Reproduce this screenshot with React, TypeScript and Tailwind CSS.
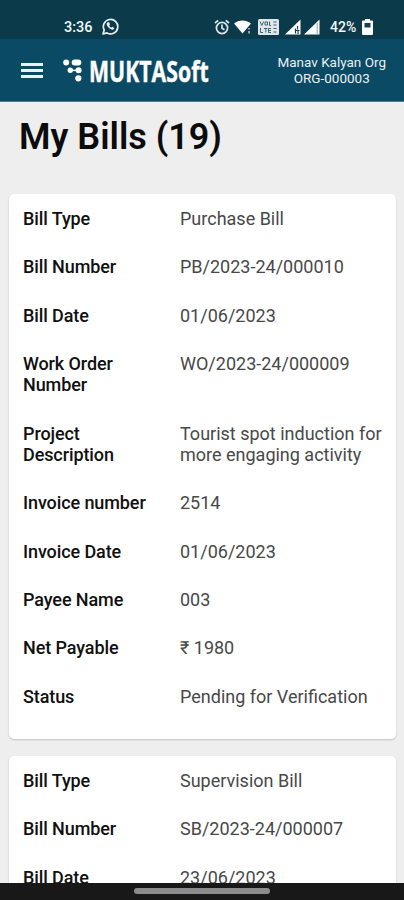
import { Fragment } from 'react'

type Field = { label: string; value: string }

const bills: Field[][] = [
  [
    { label: 'Bill Type', value: 'Purchase Bill' },
    { label: 'Bill Number', value: 'PB/2023-24/000010' },
    { label: 'Bill Date', value: '01/06/2023' },
    { label: 'Work Order Number', value: 'WO/2023-24/000009' },
    { label: 'Project Description', value: 'Tourist spot induction for more engaging activity' },
    { label: 'Invoice number', value: '2514' },
    { label: 'Invoice Date', value: '01/06/2023' },
    { label: 'Payee Name', value: '003' },
    { label: 'Net Payable', value: '₹ 1980' },
    { label: 'Status', value: 'Pending for Verification' },
  ],
  [
    { label: 'Bill Type', value: 'Supervision Bill' },
    { label: 'Bill Number', value: 'SB/2023-24/000007' },
    { label: 'Bill Date', value: '23/06/2023' },
  ],
]

function WhatsAppIcon() {
  return (
    <svg className="ml-[9px] size-[17px]" viewBox="0 0 17 17" fill="none">
      <path d="M1 16l1.2-4A7.2 7.2 0 1 1 5 14.9z" stroke="#e8eef0" strokeWidth="1.7" strokeLinejoin="round" />
      <path
        d="M5.600 4.300c-1.500.9-1.200 2.700.3 4.500 1.700 2.200 4.300 3.700 5.900 2.500l.5-1.400-2.100-1.200-1.100 1C8.300 9.200 7.600 8.400 7.200 7.400l.8-1L7.200 4.300z"
        fill="#e8eef0"
      />
    </svg>
  )
}

function AlarmIcon() {
  return (
    <svg className="size-4" viewBox="0 0 16 16" fill="none" stroke="#dfe7ea" strokeWidth="1.7">
      <circle cx="8" cy="9" r="5.6" />
      <path d="M1 4l3.200-2.700M15 4l-3.200-2.700M8 5.500V9.200l2.500 1.500" />
    </svg>
  )
}

function WifiIcon() {
  return (
    <svg className="ml-1 h-4 w-[18px]" viewBox="0 0 18 16">
      <path d="M0 4.500C5 .5 12 .5 17 4.500l-3.600 4.300-4.900 5.700z" fill="#fff" />
      <path d="M15 9v1.500M15 12v2.500" stroke="#b9c8ce" strokeWidth="1.5" />
    </svg>
  )
}

function VolteIcon() {
  return (
    <svg className="ml-[6px] h-4 w-[21px]" viewBox="0 0 21 16">
      <rect width="21" height="16" rx="1.500" fill="#dfe7ea" />
      <path
        d="M2 2.500l1.800 4 1.800-4M7 3h2.500v3H7zM11.500 2.500v4h1.500M2.500 9v4.500H5M6 9.500h3.500M7.800 9.500v4M13 9.500h-2.500v4H13M10.500 11.500H13M15.500 3h3M15.500 6h3M15.500 9.500h3M15.500 13h3"
        stroke="#406372"
        fill="none"
      />
    </svg>
  )
}

function SignalIcon({ data = false }: { data?: boolean }) {
  return (
    <svg className="size-4" viewBox="0 0 16 16">
      <path d="M15.500.5v15H0z" fill="#fff" />
      {data ? (
        <path d="M10.500 9.500v5M12.500 7v3.500M10.500 11.500h4M13 12v3" stroke="#153f50" strokeWidth="1.200" fill="none" />
      ) : (
        <path d="M13.200 4v11" stroke="#8ba3ad" />
      )}
    </svg>
  )
}

function BatteryIcon() {
  return (
    <svg className="ml-[5px] h-4 w-[11px]" viewBox="0 0 11 16">
      <path d="M3 0h5v1.500h2q1 0 1 1V15q0 1-1 1H1q-1 0-1-1V2.500q0-1 1-1h2z" fill="#fff" />
      <path d="M2.500 4h6v4.500h-6z" fill="#153f50" />
    </svg>
  )
}

function StatusBar() {
  return (
    <div className="flex h-[39px] items-start bg-[#0b3a4b] pt-[18px] text-[#f4f7f8]">
      <div className="ml-16 flex h-[17px] items-center">
        <span className="w-[29px] pt-0.5 text-[14.500px] leading-4 font-medium whitespace-nowrap">3:36</span>
        <WhatsAppIcon />
      </div>
      <div className="mr-[31px] ml-auto flex h-[17px] items-center">
        <AlarmIcon />
        <WifiIcon />
        <VolteIcon />
        <div className="ml-[6px] flex gap-[3px]">
          <SignalIcon data />
          <SignalIcon />
        </div>
        <span className="ml-[10px] w-[27px] pt-px text-[14px] leading-4 font-medium whitespace-nowrap">42%</span>
        <BatteryIcon />
      </div>
    </div>
  )
}

function Logo() {
  return (
    <div className="ml-5 flex items-center pt-px">
      <svg className="h-[23px] w-5" viewBox="0 0 20 23" fill="#fff">
        <circle cx="3.200" cy="3.400" r="3" />
        <rect x="8.700" y=".5" width="9.600" height="6" rx="3" />
        <circle cx="7.300" cy="11.300" r="2.700" />
        <circle cx="15.600" cy="11.300" r="3" />
        <path d="M7 10.600h8v1.500H7z" />
        <circle cx="15.300" cy="19.300" r="3.100" />
      </svg>
      <span className="ml-[6px] w-[119px] origin-left scale-x-[.76] font-['Open_Sans'] text-[28px] leading-8 font-bold whitespace-nowrap [-webkit-text-stroke:0.4px_white]">
        MUKTASoft
      </span>
    </div>
  )
}

function Header() {
  return (
    <header className="flex h-[63px] items-center border-b border-[#54798b] bg-[#0b4a64] text-white">
      <div className="ml-[21px] flex w-[22px] flex-col gap-[3px] pt-px">
        <span className="h-[3px] bg-[#eef0f8]" />
        <span className="h-[3px] bg-[#eef0f8]" />
        <span className="h-[3px] bg-[#eef0f8]" />
      </div>
      <Logo />
      <div className="mr-[18px] ml-auto text-center text-[13.500px] leading-4 whitespace-nowrap text-[#e9f0f3]">
        <p>Manav Kalyan Org</p>
        <p>ORG-000003</p>
      </div>
    </header>
  )
}

function BillCard({ fields }: { fields: Field[] }) {
  return (
    <section className="grid shrink-0 grid-cols-[130px_1fr] gap-x-[27px] gap-y-[27px] rounded-[5px] bg-white px-[14px] pt-[14px] pb-8 text-[18px] leading-[21.330px] shadow-[0_1px_2px_rgba(0,0,0,0.18)]">
      {fields.map((field) => (
        <Fragment key={field.label}>
          <span className="font-medium tracking-[-0.1px] text-[#101010]">{field.label}</span>
          <span className="-mr-2 text-[#484848]">{field.value}</span>
        </Fragment>
      ))}
    </section>
  )
}

function App() {
  return (
    <div className="flex h-[900px] w-[404px] flex-col overflow-hidden bg-[#eeeeee] font-['Roboto',sans-serif]">
      <StatusBar />
      <Header />
      <main className="flex min-h-0 flex-1 flex-col overflow-hidden">
        <h1 className="h-[92px] shrink-0 pt-[14px] pl-[19px] text-[36px] leading-[42px] font-semibold text-[#0b0c0c]">
          My Bills (19)
        </h1>
        <div className="flex flex-col gap-[17px] pr-2 pl-[9px]">
          {bills.map((fields) => (
            <BillCard key={fields[0].value} fields={fields} />
          ))}
        </div>
      </main>
      <footer className="flex h-[17px] shrink-0 justify-center bg-[#181818] pt-[5px]">
        <div className="h-[6px] w-[136px] rounded-full bg-[#8c8c8c]" />
      </footer>
    </div>
  )
}

export default App
